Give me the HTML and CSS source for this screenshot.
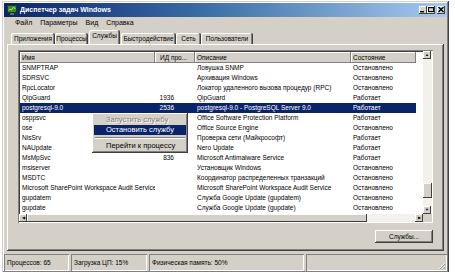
FILE: index.html
```html
<!DOCTYPE html>
<html lang="ru">
<head>
    <meta charset="UTF-8">
    <title>Диспетчер задач Windows</title>
    <link rel="stylesheet" href="styles.css">
</head>
<body>
    <div class="window">
        <div class="titlebar">
            <svg class="app-icon" width="10" height="10" viewBox="0 0 10 10">
                <rect x="0.5" y="0.5" width="9" height="7" fill="#3c8a2e" stroke="#1d3d12"/>
                <polyline points="1.5,5.5 3,4 4.5,5 6,2.5 8.5,3.5" fill="none" stroke="#b8f59a" stroke-width="0.8"/>
                <rect x="3" y="8" width="4" height="2" fill="#6a6a6a"/>
            </svg>
            <span class="title">Диспетчер задач Windows</span>
            <div class="caption-buttons">
                <span class="cap-btn">
                    <svg width="8" height="7" viewBox="0 0 8 7"><rect x="1" y="5" width="4" height="1.4" fill="#000"/></svg>
                </span>
                <span class="cap-btn">
                    <svg width="8" height="7" viewBox="0 0 8 7"><rect x="1.5" y="1.5" width="5" height="4" fill="none" stroke="#000"/><rect x="1" y="1" width="6" height="1.2" fill="#000"/></svg>
                </span>
                <span class="cap-btn close">
                    <svg width="8" height="7" viewBox="0 0 8 7"><path d="M1.5 1 L6.5 6 M6.5 1 L1.5 6" stroke="#000" stroke-width="1.3"/></svg>
                </span>
            </div>
        </div>

        <div class="menubar">
            <span>Файл</span>
            <span>Параметры</span>
            <span>Вид</span>
            <span>Справка</span>
        </div>

        <div class="tabs">
            <span class="tab" style="width: 44px">Приложения</span>
            <span class="tab" style="width: 33px">Процессы</span>
            <span class="tab active" style="width: 31px">Службы</span>
            <span class="tab" style="width: 55px">Быстродействие</span>
            <span class="tab" style="width: 25px">Сеть</span>
            <span class="tab" style="width: 52px">Пользователи</span>
        </div>

        <div class="panel">
            <div class="listview">
                <div class="list-content">
                    <table class="services">
                        <colgroup>
                            <col class="col-name">
                            <col class="col-pid">
                            <col class="col-desc">
                            <col class="col-state">
                        </colgroup>
                        <thead>
                            <tr>
                                <th>Имя</th>
                                <th class="pid-head">ИД про...</th>
                                <th>Описание</th>
                                <th>Состояние</th>
                            </tr>
                        </thead>
                        <tbody>
                            <tr><td>SNMPTRAP</td><td class="pid"></td><td>Ловушка SNMP</td><td>Остановлено</td></tr>
                            <tr><td>SDRSVC</td><td class="pid"></td><td>Архивация Windows</td><td>Остановлено</td></tr>
                            <tr><td>RpcLocator</td><td class="pid"></td><td>Локатор удаленного вызова процедур (RPC)</td><td>Остановлено</td></tr>
                            <tr><td>QipGuard</td><td class="pid">1936</td><td>QipGuard</td><td>Работает</td></tr>
                            <tr class="selected"><td>postgresql-9.0</td><td class="pid">2536</td><td>postgresql-9.0 - PostgreSQL Server 9.0</td><td>Работает</td></tr>
                            <tr><td>osppsvc</td><td class="pid"></td><td>Office Software Protection Platform</td><td>Работает</td></tr>
                            <tr><td>ose</td><td class="pid"></td><td>Office Source Engine</td><td>Остановлено</td></tr>
                            <tr><td>NisSrv</td><td class="pid"></td><td>Проверка сети (Майкрософт)</td><td>Работает</td></tr>
                            <tr><td>NAUpdate</td><td class="pid"></td><td>Nero Update</td><td>Работает</td></tr>
                            <tr><td>MsMpSvc</td><td class="pid">836</td><td>Microsoft Antimalware Service</td><td>Работает</td></tr>
                            <tr><td>msiserver</td><td class="pid"></td><td>Установщик Windows</td><td>Остановлено</td></tr>
                            <tr><td>MSDTC</td><td class="pid"></td><td>Координатор распределенных транзакций</td><td>Остановлено</td></tr>
                            <tr><td>Microsoft SharePoint Workspace Audit Service</td><td class="pid"></td><td>Microsoft SharePoint Workspace Audit Service</td><td>Остановлено</td></tr>
                            <tr><td>gupdatem</td><td class="pid"></td><td>Служба Google Update (gupdatem)</td><td>Остановлено</td></tr>
                            <tr><td>gupdate</td><td class="pid"></td><td>Служба Google Update (gupdate)</td><td>Остановлено</td></tr>
                        </tbody>
                    </table>
                </div>
                <div class="vscroll">
                    <span class="arrow-btn">&#9650;</span>
                    <div class="v-track">
                        <span class="v-thumb"></span>
                    </div>
                    <span class="arrow-btn">&#9660;</span>
                </div>
                <div class="hscroll">
                    <span class="arrow-btn">&#9664;</span>
                    <div class="h-track">
                        <span class="h-thumb"></span>
                    </div>
                    <span class="arrow-btn">&#9654;</span>
                </div>
                <div class="corner"></div>
            </div>
            <div class="actions">
                <button class="btn">Службы...</button>
            </div>
        </div>

        <div class="statusbar">
            <span class="status-cell cell-proc">Процессов: 65</span>
            <span class="status-cell cell-cpu">Загрузка ЦП: 15%</span>
            <span class="status-cell cell-mem">Физическая память: 50%</span>
            <span class="status-cell cell-rest">
                <svg class="grip" width="9" height="9" viewBox="0 0 9 9">
                    <path d="M8 2 L2 8 M8 5 L5 8" stroke="#fff" stroke-width="0.8"/>
                    <path d="M8.6 2.6 L2.6 8.6 M8.6 5.6 L5.6 8.6" stroke="#808080" stroke-width="0.8"/>
                </svg>
            </span>
        </div>

        <div class="context-menu">
            <div class="menu-item disabled">Запустить службу</div>
            <div class="menu-item hover">Остановить службу</div>
            <div class="menu-sep"></div>
            <div class="menu-item">Перейти к процессу</div>
        </div>
    </div>
</body>
</html>
```

FILE: styles.css
```css
body {
    margin: 0;
    background-color: #ffffff;
    font-family: "Liberation Sans", Arial, sans-serif;
    font-size: 6.5px;
    color: #000000;
}

.window {
    position: relative;
    width: 443px;
    height: 268px;
    margin: 1px 0 0 2px;
    padding: 2px;
    background-color: #d4d0c8;
    box-shadow: inset -1px -1px #404040, inset 1px 1px #d4d0c8,
                inset -2px -2px #808080, inset 2px 2px #ffffff;
    display: flex;
    flex-direction: column;
}

/* title bar */
.titlebar {
    height: 14px;
    display: flex;
    align-items: center;
    padding: 0 2px 0 3px;
    background: linear-gradient(to right, #0a246a, #3a6ea5 45%, #a6caf0);
}

.app-icon {
    margin-right: 3px;
}

.title {
    color: #ffffff;
    font-weight: bold;
    font-size: 7px;
    flex: 1;
}

.caption-buttons {
    display: flex;
}

.cap-btn {
    width: 8px;
    height: 8px;
    display: flex;
    align-items: center;
    justify-content: center;
    background-color: #d4d0c8;
    box-shadow: inset -1px -1px #404040, inset 1px 1px #ffffff;
}

.cap-btn.close {
    margin-left: 2px;
}

/* menu */
.menubar {
    height: 12px;
    display: flex;
    align-items: center;
    gap: 8px;
    padding-left: 11px;
    font-size: 7px;
}

/* tabs */
.tabs {
    height: 14px;
    display: flex;
    align-items: flex-end;
    padding-left: 7px;
    margin-top: 1px;
}

.tab {
    height: 11px;
    line-height: 11px;
    text-align: center;
    white-space: nowrap;
    overflow: hidden;
    box-shadow: inset -1px 0 #404040, inset 1px 1px #ffffff, inset -2px 0 #808080;
    border-radius: 2px 2px 0 0;
}

.tab.active {
    height: 14px;
    line-height: 12px;
    margin: 0 1px;
    position: relative;
    z-index: 1;
    background-color: #d4d0c8;
}

.panel {
    height: 205px;
    margin: 0 3px;
    padding: 6px 11px 0 11px;
    box-shadow: inset -1px -1px #404040, inset 1px 1px #ffffff, inset -2px -2px #808080;
    display: flex;
    flex-direction: column;
}

/* list view */
.listview {
    height: 171px;
    padding: 1px;
    background-color: #ffffff;
    box-shadow: inset 1px 1px #808080, inset -1px -1px #ffffff, inset 2px 2px #404040;
    display: grid;
    grid-template-columns: 1fr 9px;
    grid-template-rows: 1fr 8px;
}

.list-content {
    overflow: hidden;
    padding: 1px 0 0 1px;
}

.services {
    table-layout: fixed;
    border-collapse: collapse;
    width: 396px;
}

.col-name { width: 135px; }
.col-pid { width: 40px; }
.col-desc { width: 156px; }
.col-state { width: 65px; }

.services th,
.services td {
    padding: 0 0 0 2px;
    white-space: nowrap;
    overflow: hidden;
    text-align: left;
    font-weight: normal;
}

.services th {
    height: 11px;
    line-height: 11px;
    background-color: #d4d0c8;
    box-shadow: inset -1px -1px #808080, inset 1px 1px #ffffff;
}

.services th.pid-head {
    padding-left: 5px;
}

.services td {
    height: 10px;
    line-height: 10px;
}

.services td.pid {
    text-align: right;
    padding-right: 21px;
}

.services tr.selected td {
    background-color: #0a246a;
    color: #ffffff;
}

/* scrollbars */
.vscroll,
.hscroll {
    display: flex;
    background-color: #f2f1ec;
}

.vscroll {
    flex-direction: column;
}

.arrow-btn {
    width: 8px;
    height: 8px;
    font-size: 4px;
    line-height: 8px;
    text-align: center;
    background-color: #d4d0c8;
    box-shadow: inset -1px -1px #404040, inset 1px 1px #ffffff;
}

.v-track {
    flex: 1;
    display: flex;
    flex-direction: column;
    justify-content: flex-end;
    padding-bottom: 8px;
}

.v-thumb {
    height: 15px;
    background-color: #d4d0c8;
    box-shadow: inset -1px -1px #404040, inset 1px 1px #ffffff;
}

.h-track {
    flex: 1;
    display: flex;
}

.h-thumb {
    width: 340px;
    background-color: #d4d0c8;
    box-shadow: inset -1px -1px #404040, inset 1px 1px #ffffff;
}

.corner {
    background-color: #d4d0c8;
}

/* button row */
.actions {
    display: flex;
    justify-content: flex-end;
    margin-top: 7px;
}

.btn {
    width: 58px;
    height: 13px;
    padding: 0;
    border: none;
    font-family: inherit;
    font-size: 6.5px;
    background-color: #d4d0c8;
    box-shadow: inset -1px -1px #404040, inset 1px 1px #ffffff, inset -2px -2px #808080;
}

/* status bar */
.statusbar {
    height: 17px;
    margin-top: 3px;
    display: flex;
    gap: 2px;
}

.status-cell {
    display: flex;
    align-items: center;
    padding-left: 3px;
    box-shadow: inset 1px 1px #808080, inset -1px -1px #ffffff;
    white-space: nowrap;
}

.cell-proc { width: 62px; }
.cell-cpu { width: 73px; }
.cell-mem { width: 152px; }

.cell-rest {
    flex: 1;
    justify-content: flex-end;
    align-items: flex-end;
    padding: 0 1px 1px 0;
}

/* context menu */
.context-menu {
    position: absolute;
    left: 90px;
    top: 112px;
    width: 92px;
    padding: 2px;
    font-size: 7.5px;
    background-color: #d4d0c8;
    box-shadow: inset -1px -1px #404040, inset 1px 1px #ffffff, inset -2px -2px #808080;
}

.menu-item {
    height: 10px;
    line-height: 10px;
    padding-left: 12px;
    white-space: nowrap;
}

.menu-item.disabled {
    color: #808080;
    text-shadow: 1px 1px #ffffff;
}

.menu-item.hover {
    background-color: #0a246a;
    color: #ffffff;
}

.menu-sep {
    height: 0;
    margin: 2px 1px;
    border-top: 1px solid #808080;
    border-bottom: 1px solid #ffffff;
}
```
